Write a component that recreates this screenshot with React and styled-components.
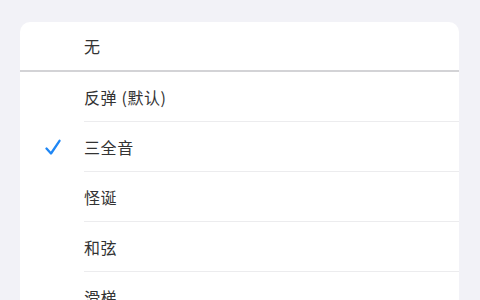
import styled, { createGlobalStyle } from "styled-components";

const GlobalStyle = createGlobalStyle`
	html, body {
		margin: 0;
		padding: 0;
		background: #f2f2f7;
		font-family: "Noto Sans CJK SC", "Noto Sans", sans-serif;
	}
`;

const Page = styled.div`
	width: 480px;
	height: 300px;
	overflow: hidden;
	padding: 22px 21px 0 20px;
	box-sizing: border-box;
`;

const Card = styled.div`
	background: #fff;
	border-radius: 10px;
	overflow: hidden;
`;

const TopRow = styled.div`
	height: 48px;
	display: flex;
	align-items: center;
	padding-left: 64px;
	border-bottom: 2px solid #d3d3d6;
`;

const Row = styled.div`
	display: flex;
	align-items: stretch;
	height: 50px;
`;

const Gutter = styled.div`
	width: 64px;
	flex-shrink: 0;
	display: flex;
	align-items: center;
	padding-left: 25px;
	box-sizing: border-box;
`;

const Content = styled.div`
	flex: 1;
	display: flex;
	align-items: center;
	border-bottom: ${(p) => (p.$last ? "none" : "1px solid #ececee")};
	box-sizing: border-box;
`;

const Label = styled.span`
	font-size: 16px;
	color: #333;
	letter-spacing: 0.6px;
`;

const Check = () => (
	<svg width="16" height="17" viewBox="0 0 16 17">
		<path
			d="M1.5 9.5 L6 14.5 L14.5 1.8"
			fill="none"
			stroke="#1f87f5"
			strokeWidth="2.3"
			strokeLinecap="round"
			strokeLinejoin="round"
		/>
	</svg>
);

const options = ["反弹 (默认)", "三全音", "怪诞", "和弦", "滑梯", "时间"];

const App = () => {
	const selected = "三全音";
	return (
		<>
			<GlobalStyle />
			<Page>
				<Card>
					<TopRow>
						<Label>无</Label>
					</TopRow>
					{options.map((name, i) => (
						<Row key={name}>
							<Gutter>{name === selected && <Check />}</Gutter>
							<Content $last={i === options.length - 1}>
								<Label>{name}</Label>
							</Content>
						</Row>
					))}
				</Card>
			</Page>
		</>
	);
};

export default App;
